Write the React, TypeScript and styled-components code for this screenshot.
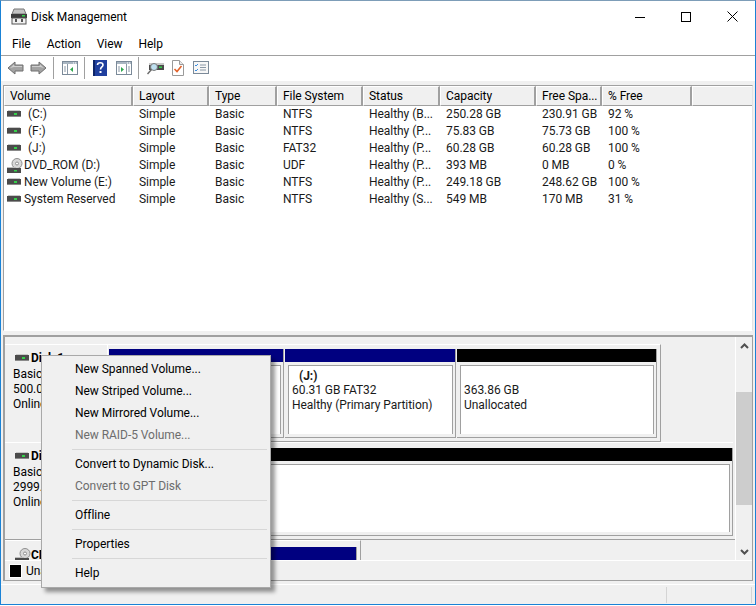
import styled, { createGlobalStyle } from 'styled-components';

const GlobalStyle = createGlobalStyle`
html, body {
  margin: 0;
  padding: 0;
  background: #fff;
}
`;

const Window = styled.div`
display: flex;
flex-direction: column;
box-sizing: border-box;
width: 756px;
height: 605px;
border: 1px solid #1a82d6;
border-top-color: #7d9db8;
background: #f0f0f0;
font-family: Roboto, "Liberation Sans", sans-serif;
font-size: 12px;
letter-spacing: -0.05px;
color: #000;
overflow: hidden;
position: relative;
`;
const TitleBar = styled.div`
display: flex;
align-items: center;
height: 31px;
padding-left: 9px;
background: #fff;
flex: none;
`;
const TitleText = styled.div`
margin-left: 3px;
flex: 1;
`;
const WinButton = styled.div`
display: flex;
align-items: center;
justify-content: center;
width: 46px;
height: 31px;
`;
const MenuBar = styled.div`
display: flex;
align-items: center;
height: 23px;
padding-left: 3px;
background: #fff;
border-bottom: 1px solid #a0a0a0;
flex: none;
`;
const MenuLabel = styled.div`
padding: 0 8px;
`;
const ToolBar = styled.div`
display: flex;
align-items: center;
height: 25px;
padding: 0 0 2px 6px;
box-sizing: border-box;
background: #fff;
flex: none;
`;
const ToolIcon = styled.div<{ $gap?: number }>`
display: flex;
margin-left: ${p => p.$gap ?? 0}px;
`;
const ToolSep = styled.div<{ $gap: number }>`
width: 1px;
height: 22px;
margin-left: ${p => p.$gap}px;
background: #a0a0a0;
`;
const Table = styled.div`
display: flex;
flex-direction: column;
box-sizing: border-box;
height: 246px;
margin: 4px 2px 0;
background: #fff;
border: 1px solid #a0a0a0;
border-right-color: #e3e3e3;
border-bottom-color: #fff;
flex: none;
`;
const HeaderRow = styled.div`
display: flex;
height: 20px;
background: #f0f0f0;
flex: none;
`;
const HeaderCell = styled.div<{ $w: number }>`
box-sizing: border-box;
width: ${p => p.$w}px;
padding-left: 5px;
line-height: 19px;
border-top: 1px solid #fff;
border-left: 1px solid #fff;
border-right: 2px solid #a0a0a0;
border-bottom: 1px solid #a0a0a0;
white-space: nowrap;
flex: none;
`;
const HeaderFill = styled.div`
flex: 1;
border-top: 1px solid #fff;
border-left: 1px solid #fff;
border-bottom: 1px solid #a0a0a0;
`;
const Row = styled.div`
display: flex;
height: 17px;
line-height: 17px;
`;
const Cell = styled.div<{ $w: number }>`
box-sizing: border-box;
width: ${p => p.$w}px;
padding-left: 6px;
white-space: nowrap;
overflow: hidden;
color: #1a1a1a;
flex: none;
`;
const VolumeCell = styled(Cell)`
display: flex;
align-items: center;
padding-left: 3px;
`;
const VolumeName = styled.span<{ $offset: number }>`
margin-left: ${p => p.$offset}px;
`;
const Lower = styled.div`
display: flex;
flex-direction: column;
box-sizing: border-box;
height: 246px;
margin: 4px 2px 0;
border: 1px solid #a0a0a0;
border-top-width: 2px;
border-left-width: 2px;
flex: none;
`;
const LowerMain = styled.div`
display: flex;
height: 223px;
flex: none;
`;
const DiskList = styled.div`
flex: 1;
display: flex;
flex-direction: column;
padding-top: 7px;
overflow: hidden;
`;
const DiskRow = styled.div<{ $h: number; $mt?: number; $line?: boolean }>`
display: flex;
height: ${p => p.$h}px;
margin-top: ${p => p.$mt ?? 0}px;
${p => (p.$line ? 'border-top: 1px solid #a0a0a0;' : '')}
flex: none;
`;
const DiskInfo = styled.div`
box-sizing: border-box;
width: 102px;
padding: 6px 0 0 8px;
line-height: 15px;
border-top: 1px solid #fff;
white-space: nowrap;
flex: none;
`;
const DiskName = styled.div<{ $gap: number; $mt?: number }>`
display: flex;
align-items: center;
gap: ${p => p.$gap}px;
height: 15px;
margin-top: ${p => p.$mt ?? 0}px;
margin-bottom: 1px;
padding-left: 2px;
font-weight: 700;
`;
const DiskFrame = styled.div<{ $w: number; $pt?: number; $flat?: boolean }>`
display: flex;
gap: 1px;
box-sizing: border-box;
width: ${p => p.$w}px;
padding: ${p => p.$pt ?? 4}px ${p => (p.$flat ? '0 0 1px' : '3px 3px 1px')};
background: #f0f0f0;
border: 1px solid #fff;
border-right: ${p => (p.$flat ? 'none' : '1px solid #a0a0a0')};
border-bottom: ${p => (p.$flat ? 'none' : '1px solid #a0a0a0')};
flex: none;
`;
const Segment = styled.div<{ $w?: number }>`
display: flex;
flex-direction: column;
width: ${p => (p.$w ? `${p.$w}px` : 'auto')};
${p => (p.$w ? 'flex: none;' : 'flex: 1;')}
box-sizing: border-box;
border-right: 1px solid #a0a0a0;
border-bottom: 1px solid #a0a0a0;
`;
const SegmentBar = styled.div<{ $color: string }>`
height: 13px;
background: ${p => p.$color};
flex: none;
`;
const SegmentBody = styled.div`
flex: 1;
padding: 3px 2px 3px 3px;
display: flex;
`;
const SegmentText = styled.div`
flex: 1;
box-sizing: border-box;
padding: 2px 0 0 3px;
line-height: 15px;
background: #fff;
border: 1px solid #a0a0a0;
border-bottom: none;
color: #1a1a1a;
white-space: nowrap;
overflow: hidden;
`;
const SegmentTitle = styled.div`
box-sizing: border-box;
height: 15px;
padding: 1px 0 0 7px;
font-weight: 700;
`;
const Scrollbar = styled.div`
display: flex;
flex-direction: column;
align-items: center;
justify-content: space-between;
width: 16px;
border-left: 1px solid #fff;
flex: none;
`;
const ScrollThumb = styled.div`
width: 100%;
height: 113px;
background: #cdcdcd;
`;
const ScrollArrow = styled.div`
display: flex;
align-items: center;
justify-content: center;
height: 17px;
`;
const Legend = styled.div`
display: flex;
align-items: center;
gap: 4px;
height: 20px;
padding-left: 4px;
border-top: 1px solid #fff;
flex: none;
`;
const Swatch = styled.div`
width: 11px;
height: 12px;
background: #000;
border: 1px solid #fff;
`;
const StatusBar = styled.div`
display: flex;
height: 20px;
margin-top: 3px;
padding-right: 3px;
border-top: 1px solid #fff;
flex: none;
`;
const StatusPane = styled.div<{ $w?: number }>`
${p => (p.$w ? `width: ${p.$w}px;` : 'flex: 1;')}
box-sizing: border-box;
margin: 2px 0;
border-right: 1px solid #d4d4d4;
`;
const ContextMenu = styled.div`
position: absolute;
left: 40px;
top: 354px;
box-sizing: border-box;
width: 230px;
height: 233px;
padding: 2px 2px;
background: #f0f0f0;
border: 1px solid #a9a9a9;
box-shadow: 4px 4px 4px rgba(0, 0, 0, 0.4);
`;
const MenuItem = styled.div<{ $disabled?: boolean }>`
height: 22px;
line-height: 22px;
padding-left: 31px;
white-space: nowrap;
color: ${p => (p.$disabled ? '#6d6d6d' : '#000')};
`;
const MenuSep = styled.div`
height: 1px;
margin: 3px 1px 3px 28px;
background: #d7d7d7;
`;

const Drive = () => (
    <svg width="14" height="11" viewBox="0 0 14 11" style={{ flex: 'none' }}>
        <rect x="1" y="1" width="12" height="1" fill="#c9c9c9" />
        <rect x="0" y="2" width="14" height="5" fill="#4b4b4b" />
        <rect x="0" y="7" width="14" height="1" fill="#8a8a8a" />
        <rect x="7" y="4" width="3" height="2" fill="#35d04a" />
    </svg>
);

const DvdDrive = () => (
    <svg width="16" height="16" viewBox="0 0 16 16" style={{ flex: 'none' }}>
        <circle cx="10" cy="5.5" r="5" fill="#d8d8d8" stroke="#8f8f8f" />
        <circle cx="10" cy="5.5" r="1.5" fill="#fff" stroke="#8f8f8f" />
        <rect x="0" y="10" width="14" height="5" fill="#4b4b4b" />
        <rect x="0" y="9" width="9" height="1" fill="#bdbdbd" />
        <rect x="7" y="12" width="3" height="1.5" fill="#35d04a" />
    </svg>
);

const AppIcon = () => (
    <svg width="18" height="17" viewBox="0 0 18 17">
        <path d="M4 1h10l2 5H2z" fill="#c4c4c4" stroke="#777" />
        <rect x="1" y="6" width="16" height="4" fill="#3d3d3d" />
        <rect x="12" y="7" width="3" height="1.5" fill="#35d04a" />
        <rect x="2" y="10" width="14" height="6" fill="#f2f2f2" stroke="#555" />
        <rect x="5" y="11" width="2" height="3" fill="#555" />
        <rect x="11" y="11" width="2" height="3" fill="#555" />
    </svg>
);

const ArrowIcon = ({ flip }: { flip?: boolean }) => (
    <svg width="17" height="14" viewBox="0 0 17 14" style={{ transform: flip ? 'scaleX(-1)' : undefined }}>
        <path d="M1 7l7-6v3h8v6H8v3z" fill="#a3a3a3" stroke="#6f6f6f" />
        <path d="M3 7l4-3.5V5h8v1H7z" fill="#cfcfcf" />
    </svg>
);

const PaneIcon = ({ right }: { right?: boolean }) => (
    <svg width="16" height="14" viewBox="0 0 16 14">
        <rect x="0.5" y="0.5" width="15" height="13" fill="#fff" stroke="#7b8a99" />
        <rect x="1" y="1" width="14" height="2" fill="#a9b6c2" />
        <rect x="11" y="1.5" width="1" height="1" fill="#fff" />
        <rect x="13" y="1.5" width="1" height="1" fill="#fff" />
        {right ? (
            <>
                <path d="M5 6l3 2.5L5 11z" fill="#2fa84f" />
                <path d="M10.5 3v10M12 6h2M12 8h2M12 10h2M2 6h2M2 8h2M2 10h2" stroke="#8a98a6" />
            </>
        ) : (
            <>
                <path d="M11 6L8 8.5l3 2.5z" fill="#2fa84f" />
                <path d="M5.5 3v10M2 6h2M2 8h2M2 10h2" stroke="#8a98a6" />
            </>
        )}
    </svg>
);

const HelpIcon = () => (
    <svg width="14" height="16" viewBox="0 0 14 16">
        <rect width="14" height="16" fill="#1f3f9e" />
        <rect x="0" y="0" width="2" height="16" fill="#0d2468" />
        <path d="M4.5 5c0-3 5.5-3 5.5 0 0 2-2.5 2-2.5 4.5" fill="none" stroke="#fff" strokeWidth="1.6" />
        <rect x="6.5" y="11" width="2" height="2" fill="#fff" />
    </svg>
);

const RescanIcon = () => (
    <svg width="17" height="15" viewBox="0 0 17 15">
        <rect x="2" y="3" width="15" height="2" fill="#c9c9c9" />
        <rect x="2" y="5" width="15" height="5" fill="#4b4b4b" />
        <rect x="12" y="6.5" width="3" height="1.5" fill="#35d04a" />
        <circle cx="7" cy="7" r="3.5" fill="#bfe0f0" stroke="#7a7a7a" />
        <path d="M4.5 9.5L0.5 14" stroke="#6a6a6a" strokeWidth="1.5" />
    </svg>
);

const DocCheckIcon = () => (
    <svg width="12" height="16" viewBox="0 0 12 16">
        <path d="M0.5 0.5h7l4 4v11h-11z" fill="#fff" stroke="#9a9a9a" />
        <path d="M7.5 0.5v4h4" fill="#e8e8e8" stroke="#9a9a9a" />
        <path d="M2.5 9l2.5 2.5L9.5 6" fill="none" stroke="#e2622a" strokeWidth="1.6" />
    </svg>
);

const ChecklistIcon = () => (
    <svg width="16" height="13" viewBox="0 0 16 13">
        <rect x="0.5" y="0.5" width="15" height="12" fill="#f7f7f7" stroke="#7b8a99" />
        <path d="M2 4l1 1 2-2M2 9l1 1 2-2" fill="none" stroke="#3b8de0" />
        <path d="M7 4h6M7 9h6M7 6.5h6" stroke="#8a98a6" />
    </svg>
);

const Chevron = ({ up }: { up?: boolean }) => (
    <svg width="9" height="6" viewBox="0 0 9 6">
        <path d={up ? 'M1 5l3.5-3.5L8 5' : 'M1 1l3.5 3.5L8 1'} fill="none" stroke="#505050" strokeWidth="2" />
    </svg>
);

const COLS = [129, 76, 68, 86, 77, 96, 66, 90];

const HEADERS = ['Volume', 'Layout', 'Type', 'File System', 'Status', 'Capacity', 'Free Spa...', '% Free'];

const VOLUMES = [
    ['(C:)', 'Simple', 'Basic', 'NTFS', 'Healthy (B...', '250.28 GB', '230.91 GB', '92 %'],
    ['(F:)', 'Simple', 'Basic', 'NTFS', 'Healthy (P...', '75.83 GB', '75.73 GB', '100 %'],
    ['(J:)', 'Simple', 'Basic', 'FAT32', 'Healthy (P...', '60.28 GB', '60.28 GB', '100 %'],
    ['DVD_ROM (D:)', 'Simple', 'Basic', 'UDF', 'Healthy (P...', '393 MB', '0 MB', '0 %'],
    ['New Volume (E:)', 'Simple', 'Basic', 'NTFS', 'Healthy (P...', '249.18 GB', '248.62 GB', '100 %'],
    ['System Reserved', 'Simple', 'Basic', 'NTFS', 'Healthy (S...', '549 MB', '170 MB', '31 %'],
];

const App = () => {
    return (
        <Window>
            <GlobalStyle />
            <TitleBar>
                <AppIcon />
                <TitleText>Disk Management</TitleText>
                <WinButton>
                    <svg width="10" height="10"><path d="M0 5.5h10" stroke="#000" /></svg>
                </WinButton>
                <WinButton>
                    <svg width="10" height="10"><rect x="0.5" y="0.5" width="9" height="9" fill="none" stroke="#000" /></svg>
                </WinButton>
                <WinButton>
                    <svg width="11" height="11"><path d="M0.5 0.5l10 10M10.5 0.5l-10 10" stroke="#000" /></svg>
                </WinButton>
            </TitleBar>
            <MenuBar>
                <MenuLabel>File</MenuLabel>
                <MenuLabel>Action</MenuLabel>
                <MenuLabel>View</MenuLabel>
                <MenuLabel>Help</MenuLabel>
            </MenuBar>
            <ToolBar>
                <ToolIcon><ArrowIcon /></ToolIcon>
                <ToolIcon $gap={6}><ArrowIcon flip /></ToolIcon>
                <ToolSep $gap={6} />
                <ToolIcon $gap={8}><PaneIcon /></ToolIcon>
                <ToolSep $gap={6} />
                <ToolIcon $gap={8}><HelpIcon /></ToolIcon>
                <ToolIcon $gap={9}><PaneIcon right /></ToolIcon>
                <ToolSep $gap={6} />
                <ToolIcon $gap={8}><RescanIcon /></ToolIcon>
                <ToolIcon $gap={8}><DocCheckIcon /></ToolIcon>
                <ToolIcon $gap={9}><ChecklistIcon /></ToolIcon>
            </ToolBar>
            <Table>
                <HeaderRow>
                    {HEADERS.map((h, i) => (
                        <HeaderCell key={h} $w={COLS[i]}>{h}</HeaderCell>
                    ))}
                    <HeaderFill />
                </HeaderRow>
                {VOLUMES.map(v => (
                    <Row key={v[0]}>
                        <VolumeCell $w={COLS[0]}>
                            {v[0].startsWith('DVD') ? <DvdDrive /> : <Drive />}
                            <VolumeName $offset={v[0].startsWith('(') ? 7 : v[0].startsWith('DVD') ? 1 : 3}>{v[0]}</VolumeName>
                        </VolumeCell>
                        {v.slice(1).map((c, i) => (
                            <Cell key={i} $w={COLS[i + 1]}>{c}</Cell>
                        ))}
                    </Row>
                ))}
            </Table>
            <Lower>
                <LowerMain>
                    <DiskList>
                        <DiskRow $h={98}>
                            <DiskInfo>
                                <DiskName $gap={2}><Drive />Disk 1</DiskName>
                                <div>Basic</div>
                                <div>500.00 GB</div>
                                <div>Online</div>
                            </DiskInfo>
                            <DiskFrame $w={554}>
                                <Segment $w={175}>
                                    <SegmentBar $color="#000080" />
                                    <SegmentBody>
                                        <SegmentText />
                                    </SegmentBody>
                                </Segment>
                                <Segment $w={171}>
                                    <SegmentBar $color="#000080" />
                                    <SegmentBody>
                                        <SegmentText>
                                            <SegmentTitle>(J:)</SegmentTitle>
                                            60.31 GB FAT32<br />Healthy (Primary Partition)
                                        </SegmentText>
                                    </SegmentBody>
                                </Segment>
                                <Segment>
                                    <SegmentBar $color="#000" />
                                    <SegmentBody>
                                        <SegmentText>
                                            <SegmentTitle />
                                            363.86 GB<br />Unallocated
                                        </SegmentText>
                                    </SegmentBody>
                                </Segment>
                            </DiskFrame>
                        </DiskRow>
                        <DiskRow $h={94}>
                            <DiskInfo>
                                <DiskName $gap={2}><Drive />Disk 0</DiskName>
                                <div>Basic</div>
                                <div>2999.88 GB</div>
                                <div>Online</div>
                            </DiskInfo>
                            <DiskFrame $w={626} $pt={5} $flat>
                                <Segment>
                                    <SegmentBar $color="#000" />
                                    <SegmentBody>
                                        <SegmentText />
                                    </SegmentBody>
                                </Segment>
                            </DiskFrame>
                        </DiskRow>
                        <DiskRow $h={40} $mt={3} $line>
                            <DiskInfo>
                                <DiskName $gap={0} $mt={1}><DvdDrive />CD-ROM 0</DiskName>
                            </DiskInfo>
                            <DiskFrame $w={254} $pt={6}>
                                <Segment>
                                    <SegmentBar $color="#000080" />
                                </Segment>
                            </DiskFrame>
                        </DiskRow>
                    </DiskList>
                    <Scrollbar>
                        <ScrollArrow><Chevron up /></ScrollArrow>
                        <ScrollThumb />
                        <ScrollArrow><Chevron /></ScrollArrow>
                    </Scrollbar>
                </LowerMain>
                <Legend>
                    <Swatch />
                    Unallocated
                </Legend>
            </Lower>
            <StatusBar>
                <StatusPane />
                <StatusPane $w={85} />
            </StatusBar>
            <ContextMenu>
                <MenuItem>New Spanned Volume...</MenuItem>
                <MenuItem>New Striped Volume...</MenuItem>
                <MenuItem>New Mirrored Volume...</MenuItem>
                <MenuItem $disabled>New RAID-5 Volume...</MenuItem>
                <MenuSep />
                <MenuItem>Convert to Dynamic Disk...</MenuItem>
                <MenuItem $disabled>Convert to GPT Disk</MenuItem>
                <MenuSep />
                <MenuItem>Offline</MenuItem>
                <MenuSep />
                <MenuItem>Properties</MenuItem>
                <MenuSep />
                <MenuItem>Help</MenuItem>
            </ContextMenu>
        </Window>
    );
};

export default App;
